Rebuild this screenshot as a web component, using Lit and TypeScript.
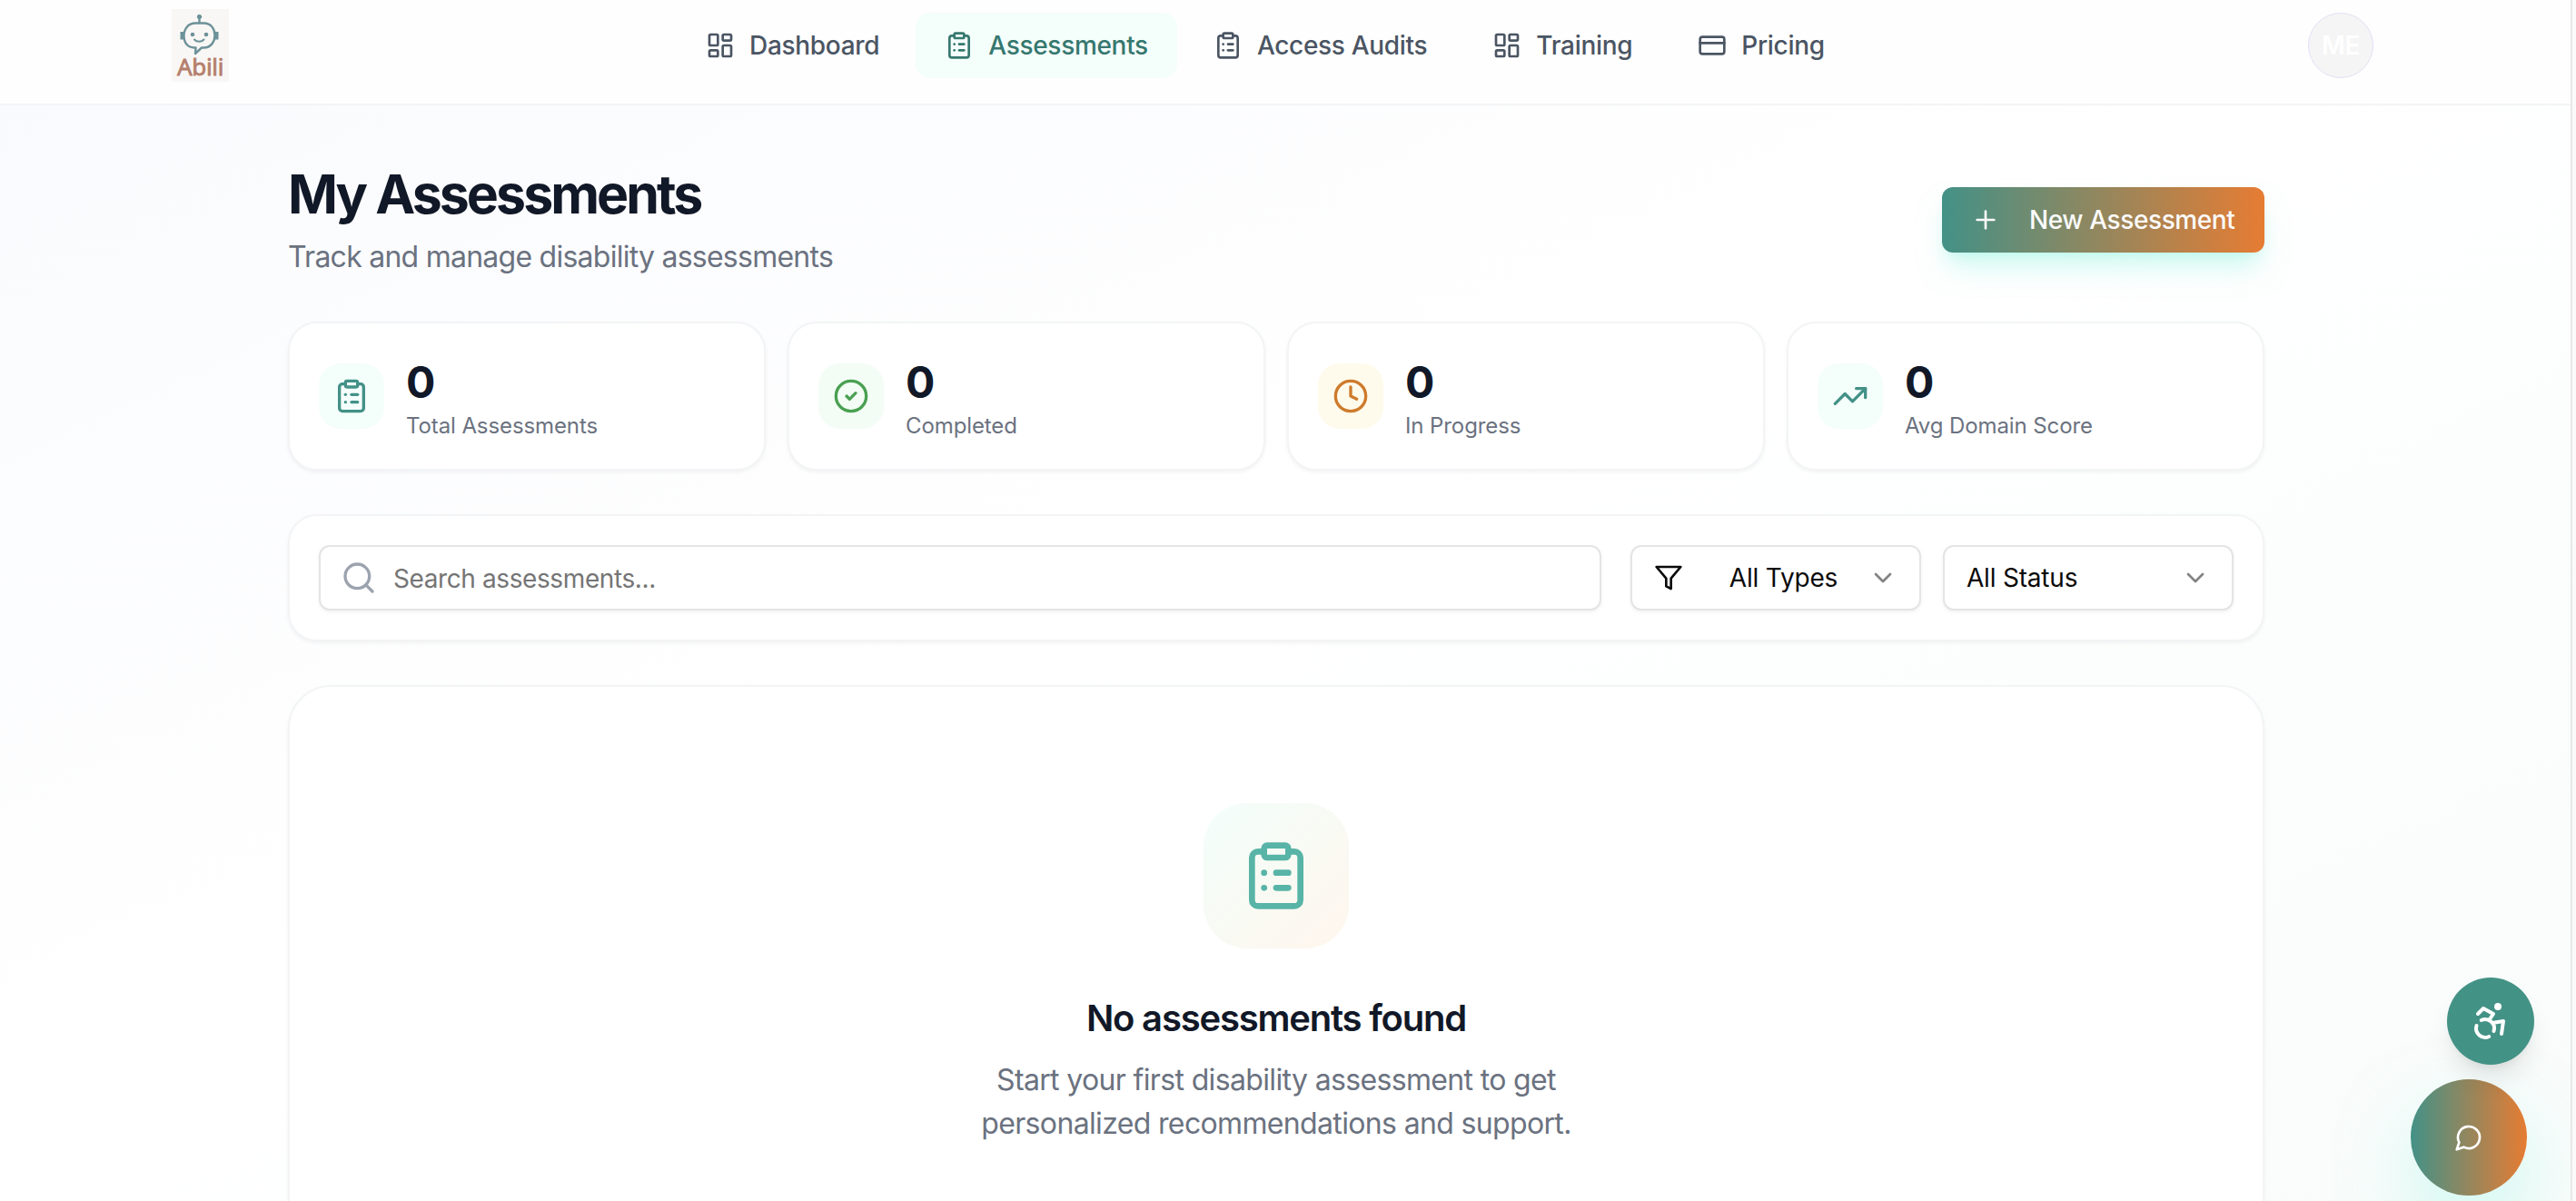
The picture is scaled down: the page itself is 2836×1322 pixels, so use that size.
import { LitElement, html, css, svg, TemplateResult } from "lit";
import { customElement } from "lit/decorators.js";

const icons: Record<string, TemplateResult> = {
  dashboard: svg`<rect x="3" y="3" width="7" height="9" rx="1"/><rect x="14" y="3" width="7" height="5" rx="1"/><rect x="14" y="12" width="7" height="9" rx="1"/><rect x="3" y="16" width="7" height="5" rx="1"/>`,
  clipboard: svg`<rect x="8" y="2" width="8" height="4" rx="1"/><path d="M16 4h2a2 2 0 0 1 2 2v14a2 2 0 0 1-2 2H6a2 2 0 0 1-2-2V6a2 2 0 0 1 2-2h2"/><path d="M12 11h4"/><path d="M12 16h4"/><path d="M8 11h.01"/><path d="M8 16h.01"/>`,
  card: svg`<rect x="2" y="5" width="20" height="14" rx="2"/><path d="M2 10h20"/>`,
  plus: svg`<path d="M5 12h14"/><path d="M12 5v14"/>`,
  check: svg`<circle cx="12" cy="12" r="10"/><path d="m9 12 2 2 4-4"/>`,
  clock: svg`<circle cx="12" cy="12" r="10"/><path d="M12 6v6l4 2"/>`,
  trend: svg`<path d="M22 7 13.5 15.5l-5-5L2 17"/><path d="M16 7h6v6"/>`,
  search: svg`<circle cx="11" cy="11" r="8"/><path d="m21 21-4.3-4.3"/>`,
  filter: svg`<path d="M22 3H2l8 9.46V19l4 2v-8.54L22 3z"/>`,
  chevron: svg`<path d="m6 9 6 6 6-6"/>`,
  access: svg`<circle cx="16" cy="4" r="1"/><path d="m18 19 1-7-6 1"/><path d="m5 8 3-3 5.5 3-2.36 3.5"/><path d="M4.24 14.5a5 5 0 0 0 6.88 6"/><path d="M13.76 17.5a5 5 0 0 0-6.88-6"/>`,
  chat: svg`<path d="M7.9 20A9 9 0 1 0 4 16.1L2 22Z"/>`,
};

const icon = (name: string, cls: string) => html`<svg
  class="icon ${cls}" viewBox="0 0 24 24" fill="none" stroke="currentColor"
  stroke-width="2" stroke-linecap="round" stroke-linejoin="round" aria-hidden="true"
>${icons[name]}</svg>`;

const navItems = [
  { icon: "dashboard", label: "Dashboard", state: "" },
  { icon: "clipboard", label: "Assessments", state: "active" },
  { icon: "clipboard", label: "Access Audits", state: "" },
  { icon: "dashboard", label: "Training", state: "" },
  { icon: "card", label: "Pricing", state: "" },
];

const stats = [
  { icon: "clipboard", tone: "teal", label: "Total Assessments" },
  { icon: "check", tone: "green", label: "Completed" },
  { icon: "clock", tone: "amber", label: "In Progress" },
  { icon: "trend", tone: "teal", label: "Avg Domain Score" },
];

@customElement("app-root")
export class AppRoot extends LitElement {
  static styles = css`
    :host {
      display: flex;
      width: 100%;
      height: 1322px;
      overflow: hidden;
      font-family: Inter, "Liberation Sans", sans-serif;
      font-size: 28px;
      color: #111827;
    }
    * { box-sizing: border-box; }
    h1, h2, p { margin: 0; }
    button { font: inherit; border: 0; background: none; padding: 0; color: inherit; }
    .icon { display: block; flex: none; }
    .s32 { width: 32px; height: 32px; }
    .s40 { width: 40px; height: 40px; }
    .s48 { width: 48px; height: 48px; }
    .s80 { width: 80px; height: 80px; }

    .page {
      position: relative;
      flex: 1;
      min-width: 0;
      height: 1322px;
      overflow: hidden;
      background: linear-gradient(to bottom right, #f9fafd 0%, #ffffff 47%, #f8fcfb 100%);
    }
    .gutter { width: 6px; flex: none; background: #fafafa; border-left: 2px solid #e8e8e8; }

    header {
      display: flex;
      align-items: flex-start;
      height: 116px;
      border-bottom: 2px solid #f3f4f6;
      background: #fefefe;
      padding: 10px 217px 0 189px;
    }
    .logo {
      width: 63px;
      height: 80px;
      background: #f9f7f5;
      display: flex;
      flex-direction: column;
      align-items: center;
      flex: none;
    }
    .logo svg { display: block; width: 46px; height: 47px; margin-top: 4px; margin-left: -3px; flex: none; }
    .logo span {
      font-family: "Noto Sans", sans-serif;
      font-size: 26px;
      line-height: 25px;
      letter-spacing: -0.3px;
      color: #b57f6d;
      -webkit-text-stroke: 0.8px #b57f6d;
    }
    nav { display: flex; gap: 8px; margin: 4px 0 0 493px; }
    .nav-item {
      display: flex;
      align-items: center;
      gap: 16px;
      height: 72px;
      padding: 0 32px;
      border-radius: 16px;
      font-weight: 500;
      letter-spacing: -0.31px;
      color: #4b5563;
      white-space: nowrap;
    }
    .nav-item.active { background: #f4fefb; color: #36786f; }
    .avatar {
      margin: 4px 0 0 auto;
      width: 72px;
      height: 72px;
      border-radius: 50%;
      border: 1px solid #e4dff5;
      background: #f5f5f5;
      color: #fff;
      display: grid;
      place-items: center;
      font-weight: 600;
      letter-spacing: -0.4px;
      flex: none;
    }

    main { margin-left: 317px; width: 2176px; padding-top: 64px; }
    .title-row { display: flex; justify-content: space-between; align-items: center; height: 124px; margin-bottom: 50px; }
    h1 { font-size: 59px; line-height: 68px; font-weight: 700; letter-spacing: -2.95px; }
    .subtitle { margin-top: 13px; font-size: 32px; line-height: 43px; letter-spacing: -0.75px; color: #6b7280; }
    .new-btn {
      display: flex;
      align-items: center;
      gap: 32px;
      width: 355px;
      height: 72px;
      padding: 0 32px;
      border-radius: 12px;
      background: linear-gradient(90deg, #439187, #e67c33);
      color: #fafafa;
      font-weight: 500;
      letter-spacing: -0.4px;
      white-space: nowrap;
      box-shadow: 0 20px 30px -6px rgba(153, 246, 228, 0.5), 0 8px 12px -8px rgba(153, 246, 228, 0.5);
    }

    .card { background: #fff; border: 2px solid #f3f4f6; border-radius: 32px; box-shadow: 0 2px 4px rgba(0, 0, 0, 0.05); }
    .stats { display: grid; grid-template-columns: repeat(4, 1fr); gap: 24px; }
    .stat { display: flex; align-items: center; gap: 24px; height: 164px; padding: 32px; }
    .tile { width: 72px; height: 72px; border-radius: 24px; display: grid; place-items: center; flex: none; }
    .tile.teal { background: #f4fefb; color: #439187; }
    .tile.green { background: #f3fdf5; color: #4aa052; }
    .tile.amber { background: #fffbec; color: #ce7b2c; }
    .value { padding-top: 2px; font-size: 48px; line-height: 64px; font-weight: 700; }
    .label { font-size: 24px; line-height: 32px; letter-spacing: -0.1px; color: #6b7280; }

    .filters { display: flex; align-items: center; height: 140px; padding: 32px; margin-top: 48px; }
    .field {
      display: flex;
      align-items: center;
      height: 72px;
      border: 2px solid #e4e4e4;
      border-radius: 12px;
      background: #fff;
      box-shadow: 0 2px 4px rgba(0, 0, 0, 0.05);
      padding: 0 24px;
      white-space: nowrap;
    }
    .search { flex: 1; padding: 0 22px; gap: 18px; margin-right: 32px; color: #757575; letter-spacing: -0.4px; }
    .search span { padding-top: 2px; }
    .search .icon { color: #9ca3af; }
    .select { width: 320px; justify-content: space-between; color: #0a0a0a; letter-spacing: -0.2px; }
    .select + .select { margin-left: 24px; }
    .funnel { margin-right: 17px; }
    .chev { opacity: 0.5; }

    .empty {
      display: flex;
      flex-direction: column;
      align-items: center;
      height: 700px;
      margin-top: 48px;
      padding-top: 128px;
      border-radius: 48px;
      text-align: center;
    }
    .big-tile {
      width: 160px;
      height: 160px;
      border-radius: 48px;
      background: linear-gradient(to bottom right, #f2fefb, #fff6ed);
      color: #58b4a7;
      display: grid;
      place-items: center;
    }
    h2 { margin-top: 49px; font-size: 40px; line-height: 56px; font-weight: 600; letter-spacing: -1.2px; }
    .empty p { margin-top: 16px; max-width: 768px; font-size: 32px; line-height: 48px; letter-spacing: -0.65px; color: #6b7280; }

    .fab { position: absolute; border-radius: 50%; display: grid; place-items: center; color: #fff; }
    .fab.access {
      right: 40px; top: 1076px; width: 96px; height: 96px; background: #439286;
      box-shadow: 0 20px 30px -6px rgba(0, 0, 0, 0.1), 0 8px 12px -8px rgba(0, 0, 0, 0.1);
    }
    .fab.chat {
      right: 48px; top: 1188px; width: 128px; height: 128px;
      background: linear-gradient(90deg, #439187, #e67c33);
      box-shadow: 0 40px 84px -6px rgba(153, 246, 228, 0.5);
    }
  `;

  render() {
    return html`
      <div class="page">
        <header>
          <div class="logo">
            <svg viewBox="0 0 46 47" fill="none" stroke="#6d9299" stroke-width="2.4" stroke-linejoin="round" stroke-linecap="round">
              <circle cx="23.500" cy="4.500" r="2.200" fill="#6d9299" stroke-width="1"/>
              <path d="M23.500 5v6"/>
              <path d="M19.500 38.500H18C10.500 38.500 6.500 33 6.500 25.500S11 11.500 19 11.500h9.500c8 0 12 6.500 12 13.500s-4.500 13.500-12 13.500h-2.500L19 45z"/>
              <path d="M4.300 21v8.500M42.700 21v8.500" stroke-width="3.600" stroke-linecap="butt"/>
              <circle cx="16" cy="24" r="2.300" fill="#6d9299" stroke="none"/>
              <circle cx="31" cy="24" r="2.300" fill="#6d9299" stroke="none"/>
              <path d="M18 29.500c2.500 3 8 3 10.500 0" stroke-width="2"/>
            </svg>
            <span>Abili</span>
          </div>
          <nav>
            ${navItems.map((n) => html`
              <a class="nav-item ${n.state}">${icon(n.icon, "s32")}<span>${n.label}</span></a>`)}
          </nav>
          <div class="avatar">ME</div>
        </header>
        <main>
          <div class="title-row">
            <div>
              <h1>My Assessments</h1>
              <p class="subtitle">Track and manage disability assessments</p>
            </div>
            <button class="new-btn">${icon("plus", "s32")}<span>New Assessment</span></button>
          </div>
          <section class="stats">
            ${stats.map((s) => html`
              <div class="card stat">
                <div class="tile ${s.tone}">${icon(s.icon, "s40")}</div>
                <div><div class="value">0</div><div class="label">${s.label}</div></div>
              </div>`)}
          </section>
          <section class="card filters">
            <div class="field search">${icon("search", "s40")}<span>Search assessments...</span></div>
            <div class="field select">${icon("filter", "s32 funnel")}<span>All Types</span>${icon("chevron", "s32 chev")}</div>
            <div class="field select"><span>All Status</span>${icon("chevron", "s32 chev")}</div>
          </section>
          <section class="card empty">
            <div class="big-tile">${icon("clipboard", "s80")}</div>
            <h2>No assessments found</h2>
            <p>Start your first disability assessment to get personalized recommendations and support.</p>
          </section>
        </main>
        <button class="fab chat" aria-label="Chat">${icon("chat", "s32")}</button>
        <button class="fab access" aria-label="Accessibility">${icon("access", "s48")}</button>
      </div>
      <div class="gutter"></div>
    `;
  }
}
